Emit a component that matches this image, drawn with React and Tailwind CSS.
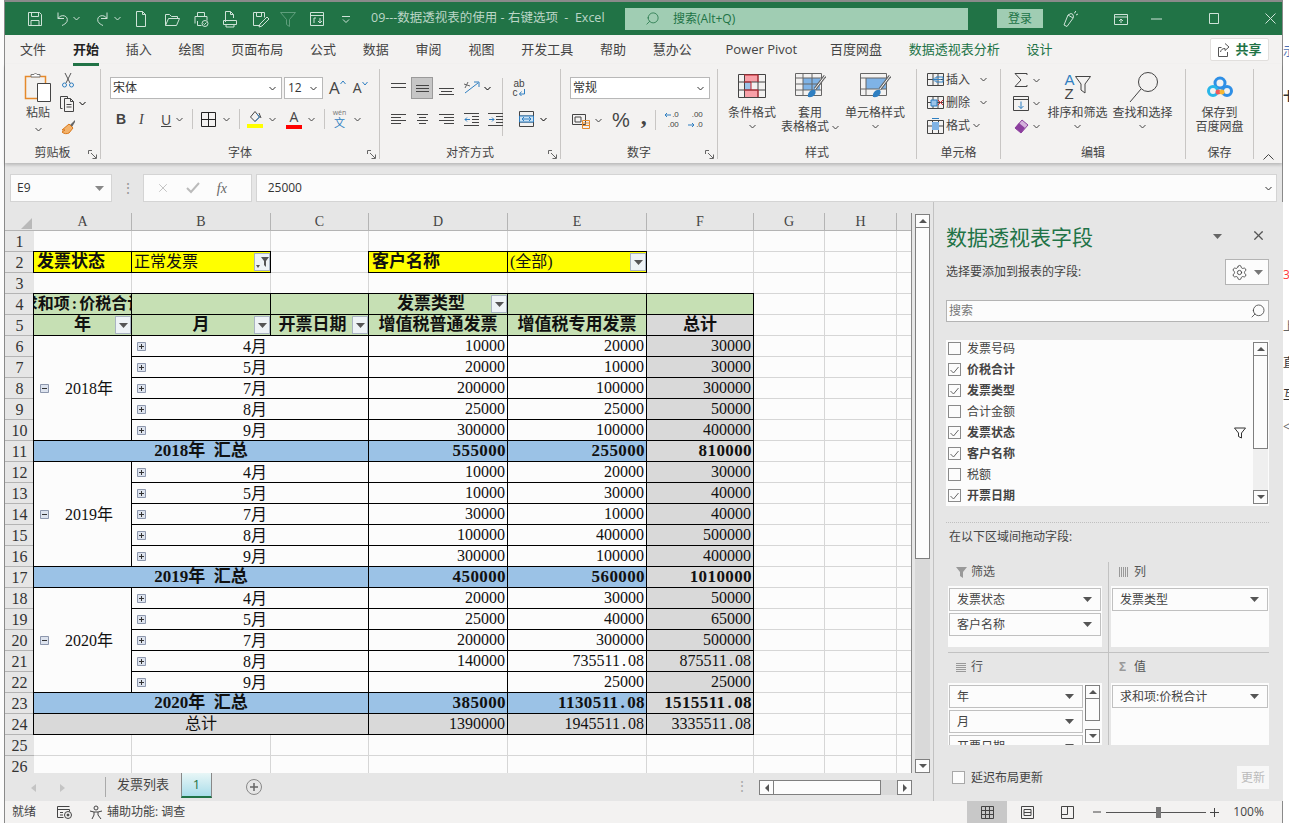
import React from "react";
import { Search, Settings, X } from "lucide-react";

const S = ({ w = 16, h = 16, c = "", children }) => (
    <svg width={w} height={h} viewBox={`0 0 ${w} ${h}`} fill="none" stroke="currentColor" strokeWidth="1" className={`shrink-0 ${c}`}>
        {children}
    </svg>
);
const Chev = ({ c = "" }) => (
    <S w={7} h={5} c={c}>
        <path d="M.5 1l3 3 3-3" />
    </S>
);
const Tri = ({ c = "text-[#555]" }) => (
    <svg width="9" height="5" viewBox="0 0 9 5" className={`shrink-0 ${c}`}>
        <path d="M0 0h9L4.5 5z" fill="currentColor" />
    </svg>
);
const Lines = ({ d, c = "" }) => (
    <S w={15} h={13} c={`text-[#444] ${c}`}>
        <path d={d} />
    </S>
);

const Launcher = () => (
    <S w={9} h={9} c="absolute right-[3px] top-[11px] text-[#666]">
        <path d="M.5 4V.5H4M3 3l5 5M4.5 8.5h4v-4" />
    </S>
);

const Group = ({ w, label, launcher, children }) => (
    <div className={`flex h-[90px] shrink-0 flex-col border-r border-[#c8c6c4] ${w}`}>
        <div className="flex-1">{children}</div>
        <div className="relative h-[20px] text-center text-[12px] leading-[28px] text-[#444]">
            {label}
            {launcher && <Launcher />}
        </div>
    </div>
);

const Big = ({ w, icon, lines, chevInline }) => (
    <div className={`flex flex-col items-center text-[12px] leading-[14px] text-[#444] ${w}`}>
        <div className="flex h-[32px] items-end pb-[3px]">{icon}</div>
        <div className="mt-[5px] flex flex-col items-center">
            {lines.map((l, i) => (
                <div key={l} className="flex items-center gap-[3px] whitespace-nowrap">
                    {l}
                    {chevInline && i === 1 && <Chev />}
                </div>
            ))}
        </div>
        {!chevInline && <Chev c="mt-[4px]" />}
    </div>
);

const CondIcon = (
    <S w={30} h={24} c="text-[#444]">
        <path d="M7 1h14v7H7z" fill="#f8a0a8" stroke="none" />
        <path d="M7 8h7v8H7z" fill="#9cc3e8" stroke="none" />
        <path d="M7 16h14v7H7z" fill="#f8a0a8" stroke="none" />
        <path d="M1.5.5h27v23h-27zM1.5 8h27M1.5 16h27M7.5.5v23M21 .5v23" />
        <path d="M7 1h14M7 8h7M14 8v8M7 16h14M21 1v7M21 16v7" stroke="#c8232c" />
    </S>
);
const TableIcon = (
    <S w={32} h={26} c="text-[#444]">
        <path d="M9 6h17v12H9z" fill="#7fb3e6" stroke="none" />
        <path d="M1.5 1.5h26v22h-26zM1.5 6h26M1.5 12h26M1.5 18h26M9 1.5v22M18 1.5v22" stroke="#666" />
        <path d="M31 4L21 17" stroke="#666" strokeWidth="3" />
        <path d="M31 4L21 17" stroke="#fff" />
        <path d="M14 25c-1-4 3-8 7-7 2 3-1 8-7 7z" fill="#2f7fc1" stroke="none" />
    </S>
);
const CellStyleIcon = (
    <S w={32} h={26} c="text-[#444]">
        <path d="M7 6h20v11H7z" fill="#7fb3e6" stroke="none" />
        <path d="M1.5 1.5h26v22h-26zM1.5 6h26M1.5 17h26M7 6v17" stroke="#666" />
        <path d="M31 4L21 17" stroke="#666" strokeWidth="3" />
        <path d="M31 4L21 17" stroke="#fff" />
        <path d="M14 25c-1-4 3-8 7-7 2 3-1 8-7 7z" fill="#2f7fc1" stroke="none" />
    </S>
);
const CloudIcon = (
    <svg width="28" height="22" viewBox="0 0 28 22" className="shrink-0">
        <circle cx="14" cy="7" r="5" fill="none" stroke="#2e8fe6" strokeWidth="3" />
        <circle cx="7" cy="15" r="4.5" fill="none" stroke="#29b6e8" strokeWidth="3" />
        <circle cx="21" cy="15" r="4.5" fill="none" stroke="#2e8fe6" strokeWidth="3" />
        <circle cx="12" cy="16" r="2.5" fill="#f0585a" />
        <circle cx="16" cy="16" r="2.5" fill="#f7b731" />
    </svg>
);

const Titlebar = () => (
    <div className="flex h-[33px] shrink-0 items-center bg-[#217346] text-[#cfe3d8]">
        <div className="ml-[21px] flex items-center">
            <S w={18} h={18}>
                <path d="M2.5 2.5h11l2 2v11h-13zM5.5 2.5v4h7v-4M5 15.5v-5h8v5" />
            </S>
            <S w={16} h={18} c="ml-[10px]">
                <path d="M4 2.5v6h6M4 8.5c3-5 11-3 9 3-1 2-3 3-5 4" />
            </S>
            <Chev c="ml-[3px]" />
            <S w={16} h={18} c="ml-[15px]">
                <path d="M12 2.5v6H6M12 8.5c-3-5-11-3-9 3 1 2 3 3 5 4" />
            </S>
            <Chev c="ml-[3px]" />
            <S w={14} h={18} c="ml-[13px]">
                <path d="M2.5 1.5h6l3 3v12h-9zM8.5 1.5v3h3" />
            </S>
            <S w={18} h={18} c="ml-[15px]">
                <path d="M2.5 15.5v-11h4l2 2h6v2M2.5 15.5h11l3-7h-11z" />
            </S>
            <S w={18} h={18} c="ml-[11px]">
                <path d="M5.5 6V2.5h7V6M3 13.5V6.500h12v4M5.500 11v4.500h4" />
                <circle cx="13" cy="13.5" r="3" />
                <path d="M11.5 13.500l1 1 2-2" />
            </S>
            <S w={16} h={18} c="ml-[12px]">
                <path d="M3.500 12V1.500h5l3 3V8M8.500 1.500v3h3M1.500 10.500h13v4h-13zM4 14.500v2.500h8v-2.500" />
            </S>
            <S w={18} h={18} c="ml-[13px]">
                <path d="M2.500 2.500h11v5M2.500 2.500v13h6M5.500 2.500v4h5v-4M16 7l-7 7-1 3 3-1 7-7z" />
            </S>
            <S w={18} h={18} c="ml-[10px] text-[#5f9e7c]">
                <path d="M1.500 2.500h15l-6 7v7l-3-2v-5z" />
            </S>
            <S w={18} h={18} c="ml-[11px]">
                <path d="M2.500 2.500h13v13h-13zM2.500 5.500h13M6 13V8h2M12 13V8M10 11l2 2 2-2" />
            </S>
            <S w={8} h={8} c="ml-[16px]">
                <path d="M0 1.500h8M1 4.500l3 3 3-3" />
            </S>
        </div>
        <div className="ml-[21px] w-[240px] whitespace-nowrap text-[12.5px] text-[#bcd6c7]">09---数据透视表的使用 - 右键选项&nbsp;&nbsp;-&nbsp;&nbsp;Excel</div>
        <div className="ml-[14px] flex h-[22px] w-[343px] items-center bg-[#a0cdb3] pl-[20px] text-[12px] text-[#217346]">
            <Search size={15} strokeWidth={1.25} className="-scale-x-100" />
            <span className="ml-[13px]">搜索(Alt+Q)</span>
        </div>
        <div className="ml-[29px] flex h-[19px] w-[46px] items-center justify-center bg-[#a0cdb3] text-[12px] text-[#217346]">登录</div>
        <S w={18} h={18} c="ml-[18px]">
            <path d="M6 16.500l-3-1.500 4-10 3-1.500 2 1 .500 3zM7 5l5 3M14 2l1-1M15 5l2-1M13 3l1.500-.5" />
        </S>
        <S w={14} h={14} c="ml-[35px]">
            <path d="M.5 2.500h13v10H.5zM.5 5h13M5 9l2-2 2 2M7 7v4" />
        </S>
        <S w={11} h={2} c="ml-[23px]">
            <path d="M0 1h11" />
        </S>
        <S w={10} h={11} c="ml-[47px]">
            <path d="M.5.5h9v10h-9z" />
        </S>
        <S w={11} h={11} c="ml-[46px]">
            <path d="M.5.5l10 10M10.500.5l-10 10" />
        </S>
    </div>
);

const tabs = ["开始", "插入", "绘图", "页面布局", "公式", "数据", "审阅", "视图", "开发工具", "帮助", "慧办公", "Power Pivot", "百度网盘"];

const Tabs = () => (
    <div className="flex h-[29px] shrink-0 items-center bg-[#f3f2f1] pl-[15px] pr-[13px] text-[13px] text-[#444]">
        <span>文件</span>
        <div className="ml-[27px] flex items-center gap-[26.75px]">
            {tabs.map((t, i) => (
                <span key={t} className={i === 0 ? "relative font-bold text-[#222]" : i === 11 ? "ml-[7px] mr-[6px]" : ""}>
                    {t}
                    {i === 0 && <i className="absolute -bottom-[7px] left-0 h-[3px] w-full bg-[#217346]" />}
                </span>
            ))}
            <span className="text-[#217346]">数据透视表分析</span>
            <span className="text-[#217346]">设计</span>
        </div>
        <div className="ml-auto flex h-[23px] w-[59px] items-center justify-center gap-[5px] rounded-[2px] border border-[#e1dfdd] bg-white text-[13px] font-bold text-[#217346]">
            <S w={13} h={14} c="text-[#555]">
                <path d="M8 .5l4 3.500-4 3.500V5.500C5 5.500 4 7 3.500 9M10.500 9v4.500h-9v-9h3" />
            </S>
            共享
        </div>
    </div>
);

const Ribbon = () => (
    <div className="flex h-[99px] shrink-0 bg-[#f3f2f1] pt-[5px] shadow-[0_2px_3px_rgba(0,0,0,.2)]">
        <Group w="w-[96px]" label="剪贴板" launcher>
            <div className="flex pl-[17px]">
                <div className="flex w-[32px] flex-col items-center text-[12px] leading-[16px] text-[#444]">
                    <svg width="28" height="30" viewBox="0 0 28 30" className="mt-[3px] shrink-0">
                        <path d="M1.500 4.500h20v22h-20z" fill="none" stroke="#e58a2c" strokeWidth="1.500" />
                        <path d="M7 5V2.500h3L11.500 1 13 2.500h3V5z" fill="#fff" stroke="#777" />
                        <path d="M13.500 11.500h13v18h-13z" fill="#fff" stroke="#444" />
                    </svg>
                    <span className="mt-[3px] whitespace-nowrap">粘贴</span>
                    <Chev c="mt-[6px]" />
                </div>
                <div className="ml-[5px] flex flex-col pt-[3px]">
                    <svg width="14" height="16" viewBox="0 0 14 16" className="ml-[2px] shrink-0" fill="none">
                        <path d="M4 1l5 10M10 1L5 11" stroke="#555" />
                        <circle cx="3.500" cy="13" r="2" stroke="#2f7fc1" />
                        <circle cx="10.500" cy="13" r="2" stroke="#2f7fc1" />
                    </svg>
                    <div className="mt-[7px] flex items-center gap-[3px]">
                        <S w={17} h={17} c="text-[#444]">
                            <path d="M3.500 13.500h-2v-12h7v2M5.500 3.500h6l3 3v10h-9zM11.500 3.500v3h3M7.500 9.500h5M7.500 12h5" />
                        </S>
                        <Chev />
                    </div>
                    <svg width="16" height="16" viewBox="0 0 16 16" className="ml-[1px] mt-[7px] shrink-0" fill="none">
                        <path d="M15 1l-5 5 2 2 3-5z" fill="#666" />
                        <path d="M9 5l4 4-4 5c-2 1-5 1-7-1l3-2-3 0z" fill="#f3b26a" stroke="#d9771a" />
                    </svg>
                </div>
            </div>
        </Group>
        <Group w="w-[279px]" label="字体" launcher>
            <div className="flex items-center pl-[9px] pt-[8px]">
                <div className="flex h-[22px] w-[172px] items-center justify-between border border-[#b8b8b8] bg-white px-[2px] pr-[5px] text-[12px] text-[#333]">
                    宋体
                    <Chev />
                </div>
                <div className="ml-[2px] flex h-[22px] w-[39px] items-center justify-between border border-[#b8b8b8] bg-white px-[3px] pr-[5px] text-[12px] text-[#333]">
                    12
                    <Chev />
                </div>
                <span className="ml-[6px] flex items-start text-[17px] leading-[20px] text-[#444]">
                    A<S w={6} h={5} c="mt-[2px] text-[#2f7fc1]"><path d="M.5 4l2.500-3 2.500 3" /></S>
                </span>
                <span className="ml-[7px] flex items-start text-[14px] leading-[20px] text-[#444]">
                    A<S w={6} h={5} c="mt-[3px] text-[#2f7fc1]"><path d="M.5 1l2.500 3 2.500-3" /></S>
                </span>
            </div>
            <div className="mt-[10px] flex h-[20px] items-center pl-[15px] text-[14px] text-[#444]">
                <span className="w-[9px] font-['Liberation_Sans'] font-bold">B</span>
                <span className="ml-[14px] w-[9px] font-['Liberation_Serif'] italic">I</span>
                <span className="ml-[13px] w-[9px] underline">U</span>
                <Chev c="ml-[6px]" />
                <i className="ml-[9px] h-[20px] border-l border-[#c8c6c4]" />
                <S w={15} h={15} c="ml-[8px] text-[#222]">
                    <path d="M.5.500h14v14H.5zM7.500.5v14M.5 7.500h14" />
                </S>
                <Chev c="ml-[7px]" />
                <i className="ml-[9px] h-[20px] border-l border-[#c8c6c4]" />
                <div className="ml-[7px] flex w-[16px] flex-col items-center">
                    <S w={13} h={12} c="text-[#444]">
                        <path d="M6 .5L1.500 6 6 10.500 10.500 6zM10 2l2 5" />
                        <path d="M8 3l2.500 3-4.500 4.500" stroke="#2f7fc1" />
                    </S>
                    <i className="mt-[1px] h-[4px] w-[16px] bg-[#ffff00]" />
                </div>
                <Chev c="ml-[6px]" />
                <div className="ml-[10px] flex w-[16px] flex-col items-center text-[14px] leading-[14px]">
                    A<i className="mt-[1px] h-[4px] w-[16px] bg-[#ff0000]" />
                </div>
                <Chev c="ml-[6px]" />
                <i className="ml-[9px] h-[20px] border-l border-[#c8c6c4]" />
                <div className="ml-[7px] flex w-[15px] flex-col items-center text-[7px] leading-[8px] text-[#777]">
                    wén
                    <span className="text-[11px] leading-[12px] text-[#2f7fc1]">文</span>
                </div>
                <Chev c="ml-[7px]" />
            </div>
        </Group>
        <Group w="w-[181px]" label="对齐方式" launcher>
            <div className="mt-[8px] flex h-[22px] items-center pl-[11px]">
                <Lines d="M0 1.500h15M0 5.500h15" />
                <div className="ml-[5px] flex h-[22px] w-[22px] items-center justify-center border border-[#9a9a9a] bg-[#c6c6c6]">
                    <Lines d="M1 3.500h13M1 6.500h13M1 9.500h13" />
                </div>
                <Lines d="M0 6.500h15M2 9.500h11M0 12.500h15" c="ml-[6px]" />
                <S w={18} h={16} c="ml-[9px] text-[#2f7fc1]">
                    <path d="M2 13L15 3M11 2h5v5" />
                    <path d="M1 4l6 2M2 8l3-6" stroke="#666" />
                </S>
                <Chev c="ml-[3px]" />
                <i className="ml-[11px] mt-[38px] h-[58px] self-center border-l border-[#c8c6c4]" />
                <div className="ml-[9px] flex w-[14px] flex-col items-center font-['Liberation_Sans'] text-[10px] leading-[9px] text-[#444]">
                    ab
                    <span className="flex items-center">c<S w={8} h={9} c="text-[#2f7fc1]"><path d="M6.500 1v5h-5M3.500 3.500l-2 2.500 2 2" /></S></span>
                </div>
            </div>
            <div className="mt-[7px] flex h-[26px] items-center pl-[11px]">
                <Lines d="M0 1.500h15M0 4.500h10M0 7.500h15M0 10.500h10" />
                <Lines d="M2 1.500h11M4 4.500h7M2 7.500h11M4 10.500h7" c="ml-[9px]" />
                <Lines d="M0 1.500h15M5 4.500h10M0 7.500h15M5 10.500h10" c="ml-[9px]" />
                <S w={15} h={13} c="ml-[10px] text-[#444]">
                    <path d="M0 .5h15M8 3.500h7M8 6.500h7M8 9.500h7M0 12.500h15" />
                    <path d="M6 6.500H1M3 4.500l-2 2 2 2" stroke="#2f7fc1" />
                </S>
                <S w={15} h={13} c="ml-[9px] text-[#444]">
                    <path d="M0 .5h15M8 3.500h7M8 6.500h7M8 9.500h7M0 12.500h15" />
                    <path d="M1 6.500h5M4 4.500l2 2-2 2" stroke="#2f7fc1" />
                </S>
                <S w={15} h={16} c="ml-[16px] text-[#444]">
                    <path d="M.5.500h14v15H.5zM.5 5h14M.5 11h14" />
                    <path d="M.5 5h14v6H.5z" fill="#cde3f5" stroke="#2f7fc1" />
                    <path d="M3 8h9M5 6l-2 2 2 2M10 6l2 2-2 2" stroke="#2f7fc1" />
                </S>
                <Chev c="ml-[6px]" />
            </div>
        </Group>
        <Group w="w-[157px]" label="数字" launcher>
            <div className="ml-[9px] mt-[8px] flex h-[22px] w-[140px] items-center justify-between border border-[#b8b8b8] bg-white pl-[2px] pr-[5px] text-[12px] text-[#333]">
                常规
                <Chev />
            </div>
            <div className="mt-[9px] flex h-[24px] items-center pl-[11px] text-[#444]">
                <S w={18} h={17}>
                    <path d="M.5 2.500h13v10H.5z" />
                    <path d="M3 5h6v5H3z" />
                    <path d="M10.500 8.500h7v8h-7zM10.500 11h7M10.500 13.500h7" stroke="#e58a2c" />
                </S>
                <Chev c="ml-[5px]" />
                <span className="ml-[10px] font-['Liberation_Sans'] text-[20px] leading-[20px]">%</span>
                <span className="ml-[11px] -translate-y-[4px] font-['Liberation_Serif'] text-[24px] font-bold leading-[16px]">,</span>
                <i className="ml-[8px] h-[20px] border-l border-[#c8c6c4]" />
                <div className="ml-[7px] flex w-[16px] flex-col font-['Liberation_Sans'] text-[8px] leading-[10px]">
                    <span className="flex items-center justify-end gap-[1px]"><S w={7} h={6} c="text-[#2f7fc1]"><path d="M7 3H1M3 1L1 3l2 2" /></S>.0</span>
                    <span className="text-right">.00</span>
                </div>
                <div className="ml-[8px] flex w-[16px] flex-col font-['Liberation_Sans'] text-[8px] leading-[10px]">
                    <span className="text-right">.00</span>
                    <span className="flex items-center justify-end gap-[1px]"><S w={7} h={6} c="text-[#2f7fc1]"><path d="M0 3h6M4 1l2 2-2 2" /></S>.0</span>
                </div>
            </div>
        </Group>
        <Group w="w-[199px]" label="样式">
            <div className="flex pl-[4px]">
                <Big w="w-[60px]" icon={CondIcon} lines={["条件格式"]} />
                <Big w="w-[56px]" icon={TableIcon} lines={["套用", "表格格式"]} chevInline />
                <Big w="w-[74px]" icon={CellStyleIcon} lines={["单元格样式"]} />
            </div>
        </Group>
        <Group w="w-[84px]" label="单元格">
            <div className="flex flex-col gap-[6px] pl-[10px] pt-[2px] text-[12px] leading-[17px] text-[#444]">
                <div className="flex items-center">
                    <S w={17} h={17}><path d="M.5 2.500h16v12H.5zM.5 8.500h16M6 2.500v12M11 2.500v12" /><path d="M9 6h7v5H9zM6 8.500h8M8 6.500l-2 2 2 2" stroke="#2f7fc1" /></S>
                    <span className="ml-[2px]">插入</span>
                    <Chev c="ml-[10px]" />
                </div>
                <div className="flex items-center">
                    <S w={17} h={17}><path d="M.5 2.500h16v12H.5zM.5 8.500h16M6 2.500v12M11 2.500v12" /><path d="M4 6h6v6H4z" fill="#9cc3e8" stroke="#2f7fc1" /><path d="M11 6l5 5M16 6l-5 5" stroke="#d9272e" /></S>
                    <span className="ml-[2px]">删除</span>
                    <Chev c="ml-[10px]" />
                </div>
                <div className="flex items-center">
                    <S w={17} h={17}><path d="M.5 3.500h16v13H.5zM.5 9h16M5.500 3.500v13M11.500 3.500v13" /><path d="M5 5h7v8H5z" fill="#7fb3e6" stroke="none" /><path d="M5 1.500h7" stroke="#2f7fc1" /></S>
                    <span className="ml-[2px]">格式</span>
                    <Chev c="ml-[3px]" />
                </div>
            </div>
        </Group>
        <Group w="w-[185px]" label="编辑">
            <div className="flex text-[12px] leading-[14px] text-[#444]">
                <div className="flex w-[44px] flex-col gap-[8px] pl-[12px] pt-[3px]">
                    <div className="flex items-center gap-[4px]">
                        <S w={16} h={16}><path d="M14 3V1.500H2L8 8l-6 6.500h12V13" /></S>
                        <Chev />
                    </div>
                    <div className="flex items-center gap-[4px]">
                        <S w={16} h={15}><path d="M.5.5h15v14H.5zM.5 3.500h15" /><path d="M8 5.500v7M5.500 10L8 12.500 10.500 10" stroke="#2f7fc1" /></S>
                        <Chev />
                    </div>
                    <div className="flex items-center gap-[4px]">
                        <svg width="16" height="15" viewBox="0 0 16 15" className="shrink-0"><path d="M9 1l6 5-7 8-6-5z" fill="#d4b1dc" stroke="#8c3f9e" /><path d="M6 4l6 5-4 5-6-5z" fill="#8c3f9e" /></svg>
                        <Chev />
                    </div>
                </div>
                <div className="flex w-[65px] flex-col items-center">
                    <div className="flex h-[32px] items-end">
                        <div className="flex flex-col font-['Liberation_Sans'] text-[15px] leading-[14px]">
                            <span className="text-[#2f7fc1]">A</span>
                            <span>Z</span>
                        </div>
                        <S w={16} h={20} c="mb-[5px] text-[#444]"><path d="M.5.5h15L10 8v9l-4-3V8z" /></S>
                    </div>
                    <div className="mt-[5px] whitespace-nowrap">排序和筛选</div>
                    <Chev c="mt-[4px]" />
                </div>
                <div className="flex w-[65px] flex-col items-center">
                    <S w={30} h={32} c="mt-[3px] text-[#444]">
                        <circle cx="20" cy="10" r="9.500" />
                        <path d="M13 17L2 30" />
                    </S>
                    <div className="mt-[2px] whitespace-nowrap">查找和选择</div>
                    <Chev c="mt-[4px]" />
                </div>
            </div>
        </Group>
        <Group w="w-[68px]" label="保存">
            <div className="flex flex-col items-center text-[12px] leading-[14px] text-[#444]">
                <div className="flex h-[32px] items-end pb-[3px]">{CloudIcon}</div>
                <div className="mt-[5px]">保存到</div>
                <div>百度网盘</div>
            </div>
        </Group>
        <div className="flex flex-1 items-end justify-center pb-[3px] text-[#444]">
            <S w={11} h={6}><path d="M.5 5.500l5-5 5 5" /></S>
        </div>
    </div>
);

const FormulaBar = () => (
    <div className="flex h-[39px] shrink-0 items-end pl-[5px] pr-[5px]">
        <div className="flex h-[28px] w-[102px] items-center justify-between border border-[#d4d4d4] bg-[#fcfcfc] pl-[6px] pr-[7px] font-['Open_Sans'] text-[12px] text-[#333]">
            E9
            <Tri c="text-[#888]" />
        </div>
        <div className="flex h-[28px] w-[31px] items-center justify-center text-[14px] leading-[6px] tracking-tighter text-[#999]">⋮</div>
        <div className="flex h-[28px] w-[109px] items-center border border-[#d4d4d4] bg-[#fcfcfc] pl-[12px] text-[#bbb]">
            <X size={14} strokeWidth={1.5} />
            <S w={14} h={12} c="ml-[16px]"><path d="M1 6l4 4 8-9" strokeWidth="2" /></S>
            <span className="ml-[17px] font-['Liberation_Serif'] text-[14px] italic text-[#666]">fx</span>
        </div>
        <div className="ml-[4px] flex h-[28px] w-[1023px] items-center justify-between border border-[#d4d4d4] bg-[#fcfcfc] pl-[11px] pr-[4px] font-['Open_Sans'] text-[12px] text-[#333]">
            25000
            <Chev />
        </div>
    </div>
);

const Num = ({ v }) => {
    const [a, b] = String(v).split(".");
    return (
        <>
            {a}
            {b && (
                <>
                    <span className="px-[2px]">.</span>
                    {b}
                </>
            )}
        </>
    );
};

const E = () => <div className="border-b border-r border-[#d6d6d6] bg-[#fcfcfc]" />;
const R = ({ n }) => (
    <div className="border-b border-[#b4b4b4] bg-[#e6e6e6] text-center text-[16px] leading-[21px] text-[#333]">{n}</div>
);
const P = ({ bg = "bg-[#fcfcfc]", c = "", children }) => (
    <div className={`relative -ml-px -mt-px overflow-hidden whitespace-nowrap border border-black text-[16px] leading-[19px] text-[#111] ${bg} ${c}`}>
        {children}
    </div>
);
const DD = ({ filter }) => (
    <span className="absolute bottom-[1px] right-0 top-[1px] flex w-[16px] items-center justify-center gap-[1px] border border-[#a9b4c2] bg-[#eef3f6]">
        {filter ? (
            <>
                <svg width="4" height="3" viewBox="0 0 4 3" className="mt-[8px] shrink-0"><path d="M0 0h4L2 3z" fill="#555" /></svg>
                <svg width="8" height="10" viewBox="0 0 8 10" className="shrink-0"><path d="M0 0h8L5 4v6L3 8V4z" fill="#555" /></svg>
            </>
        ) : (
            <Tri />
        )}
    </span>
);
const Box = ({ sign }) => (
    <svg width="9" height="9" viewBox="0 0 9 9" className="shrink-0 text-[#445]" fill="none">
        <path d="M.5.5h8v8h-8z" fill="#dde3ee" stroke="#8d97ad" />
        <path d={sign === "-" ? "M2 4.500h5" : "M2 4.500h5M4.500 2v5"} stroke="#333" />
    </svg>
);

const green = "bg-[#c6e0b4]";
const yellow = "bg-[#ffff00]";
const blue = "bg-[#9bc2e6]";
const gray = "bg-[#d9d9d9]";
const head = "text-[17px] font-bold";
const total = "pr-[1px] text-right text-[17px] font-bold tracking-[.4px]";

const years = [
    {
        y: "2018",
        start: 6,
        rows: [["4月", 10000, 20000, 30000], ["5月", 20000, 10000, 30000], ["7月", 200000, 100000, 300000], ["8月", 25000, 25000, 50000], ["9月", 300000, 100000, 400000]],
        sum: [555000, 255000, 810000],
    },
    {
        y: "2019",
        start: 12,
        rows: [["4月", 10000, 20000, 30000], ["5月", 10000, 30000, 40000], ["7月", 30000, 10000, 40000], ["8月", 100000, 400000, 500000], ["9月", 300000, 100000, 400000]],
        sum: [450000, 560000, 1010000],
    },
    {
        y: "2020",
        start: 18,
        rows: [["4月", 20000, 30000, 50000], ["5月", 25000, 40000, 65000], ["7月", 200000, 300000, 500000], ["8月", 140000, "735511.08", "875511.08"], ["9月", "", 25000, 25000]],
        sum: [385000, "1130511.08", "1515511.08"],
    },
];

const Blank = () => (
    <>
        <E />
        <E />
        <E />
    </>
);

const Sheet = () => (
    <div className="h-[560px] w-[907px] shrink-0 overflow-hidden border-r border-[#8a8a8a] font-['Liberation_Serif','Noto_Sans_CJK_SC',serif]">
        <div className="grid grid-cols-[29px_98px_139px_98px_139px_139px_107px_71px_72px_15px] grid-rows-[18px] auto-rows-[21px]">
            <div className="flex items-end justify-end border-b border-[#b4b4b4] bg-[#e6e6e6] pb-[1px] pr-[2px]">
                <svg width="11" height="11" viewBox="0 0 11 11" className="shrink-0"><path d="M11 0v11H0z" fill="#b9b9b9" /></svg>
            </div>
            {["A", "B", "C", "D", "E", "F", "G", "H", ""].map((l, i) => (
                <div key={i} className="border-b border-r border-[#b4b4b4] bg-[#e6e6e6] text-center text-[14px] leading-[18px] text-[#444]">
                    {l}
                </div>
            ))}

            <R n={1} />
            <E /><E /><E /><E /><E /><E /><E /><E /><E />

            <R n={2} />
            <P bg={yellow} c={`pl-[3px] ${head}`}>发票状态</P>
            <P bg={yellow} c="pl-[2px]">正常发票<DD filter /></P>
            <E />
            <P bg={yellow} c={`pl-[3px] ${head}`}>客户名称</P>
            <P bg={yellow} c="pl-[2px]">(全部)<DD /></P>
            <E /><E /><E /><E />

            <R n={3} />
            <E /><E /><E /><E /><E /><E /><E /><E /><E />

            <R n={4} />
            <P bg={green} c="flex justify-center font-bold"><span className="shrink-0">求和项<span className="px-[2px]">:</span>价税合计</span></P>
            <P bg={green} />
            <P bg={green} />
            <P bg={green} c={`pr-[14px] text-center ${head}`}>发票类型<DD /></P>
            <P bg={green} />
            <P bg={green} />
            <Blank />

            <R n={5} />
            <P bg={green} c={`text-center ${head}`}>年<DD /></P>
            <P bg={green} c={`text-center ${head}`}>月<DD /></P>
            <P bg={green} c={`pr-[14px] text-center ${head}`}>开票日期<DD /></P>
            <P bg={green} c={`text-center ${head}`}>增值税普通发票</P>
            <P bg={green} c={`text-center ${head}`}>增值税专用发票</P>
            <P bg={gray} c={`text-center ${head}`}>总计</P>
            <Blank />

            {years.map((b) => (
                <React.Fragment key={b.y}>
                    {b.rows.map((r, i) => (
                        <React.Fragment key={r[0]}>
                            <R n={b.start + i} />
                            {i === 0 && (
                                <P c="row-span-5 flex items-center pl-[6px]">
                                    <Box sign="-" />
                                    <span className="ml-[16px]">{b.y}年</span>
                                </P>
                            )}
                            <P c="col-span-2 flex items-center justify-between pl-[5px] pr-[101px]">
                                <Box />
                                <span>{r[0]}</span>
                            </P>
                            <P c="pr-[2px] text-right"><Num v={r[1]} /></P>
                            <P c="pr-[2px] text-right"><Num v={r[2]} /></P>
                            <P bg={gray} c="pr-[2px] text-right"><Num v={r[3]} /></P>
                            <Blank />
                        </React.Fragment>
                    ))}
                    <R n={b.start + 5} />
                    <P bg={blue} c={`col-span-3 text-center ${head}`}>{b.y}年&nbsp;&nbsp;汇总</P>
                    <P bg={blue} c={total}><Num v={b.sum[0]} /></P>
                    <P bg={blue} c={total}><Num v={b.sum[1]} /></P>
                    <P bg={gray} c={total}><Num v={b.sum[2]} /></P>
                    <Blank />
                </React.Fragment>
            ))}

            <R n={24} />
            <P bg={gray} c="col-span-3 text-center">总计</P>
            <P bg={gray} c="pr-[2px] text-right"><Num v={1390000} /></P>
            <P bg={gray} c="pr-[2px] text-right"><Num v="1945511.08" /></P>
            <P bg={gray} c="pr-[2px] text-right"><Num v="3335511.08" /></P>
            <Blank />

            <R n={25} />
            <E /><E /><E /><E /><E /><E /><E /><E /><E />
            <R n={26} />
            <E /><E /><E /><E /><E /><E /><E /><E /><E />
        </div>
    </div>
);

const ArrowBtn = ({ dir, c = "" }) => (
    <div className={`flex h-[14px] w-[15px] shrink-0 items-center justify-center border border-[#7f7f7f] bg-[#fcfcfc] ${c}`}>
        <svg width="8" height="8" viewBox="0 0 8 8" className="shrink-0 text-[#555]">
            <path
                d={dir === "up" ? "M0 6h8L4 2z" : dir === "down" ? "M0 2h8L4 6z" : dir === "left" ? "M6 0v8L2 4z" : "M2 0v8l4-4z"}
                fill="currentColor"
            />
        </svg>
    </div>
);

const SheetTabs = () => (
    <div className="flex h-[28px] w-[928px] shrink-0 items-start text-[13px] text-[#444]">
        <div className="flex h-[23px] w-[100px] shrink-0 items-center">
            <svg width="5" height="8" viewBox="0 0 5 8" className="ml-[26px] mt-[6px] shrink-0"><path d="M5 0v8L0 4z" fill="#c4c4c4" /></svg>
            <svg width="5" height="8" viewBox="0 0 5 8" className="ml-[24px] mt-[6px] shrink-0"><path d="M0 0v8l5-4z" fill="#c4c4c4" /></svg>
        </div>
        <div className="mt-[4px] h-[20px] border-l border-[#aaa]" />
        <div className="ml-[11px] flex h-[24px] items-center">发票列表</div>
        <div className="ml-[12px] flex h-[25px] w-[31px] items-center justify-center border-x border-b-[2px] border-[#888] border-b-[#217346] bg-gradient-to-b from-[#e8f6f6] to-[#a9ddea] text-[#217346]">1</div>
        <div className="ml-[34px] mt-[6px] flex h-[16px] w-[16px] items-center justify-center rounded-full border border-[#888] text-[#666]">
            <S w={8} h={8}><path d="M4 0v8M0 4h8" strokeWidth="1.500" /></S>
        </div>
        <div className="ml-[473px] mt-[6px] text-[14px] leading-[14px] text-[#aaa]">⋮</div>
        <div className="ml-[10px] mt-[7px] flex h-[15px] w-[153px] items-stretch bg-[#d9d9d9]">
            <ArrowBtn dir="left" c="!h-[15px]" />
            <div className="w-[107px] border-y border-r border-[#7f7f7f] bg-[#fcfcfc]" />
            <div className="flex-1" />
            <ArrowBtn dir="right" c="!h-[15px]" />
        </div>
    </div>
);

const FieldRow = ({ label, on, bold, filter }) => (
    <div className="flex h-[21px] items-center pl-[2px] text-[12px] text-[#444]">
        <div className="flex h-[13px] w-[13px] items-center justify-center border border-[#8a8a8a] bg-[#fcfcfc]">
            {on && <S w={9} h={8} c="text-[#666]"><path d="M.5 4l3 3 5-6" /></S>}
        </div>
        <span className={`ml-[6px] ${bold ? "font-bold" : ""}`}>{label}</span>
        {filter && (
            <S w={12} h={12} c="ml-auto mr-[3px] text-[#333]"><path d="M.5 1h11L7.500 6v5l-3-1.500V6z" /></S>
        )}
    </div>
);

const fields = [
    ["发票号码", false],
    ["价税合计", true],
    ["发票类型", true],
    ["合计金额", false],
    ["发票状态", true, true],
    ["客户名称", true],
    ["税额", false],
    ["开票日期", true],
];

const Pill = ({ label, c = "" }) => (
    <div className={`flex h-[23px] shrink-0 items-center justify-between border border-[#c0c0c0] bg-[#fcfcfc] pl-[7px] pr-[8px] text-[12px] text-[#444] ${c}`}>
        {label}
        <Tri />
    </div>
);

const AreaTitle = ({ icon, label }) => (
    <div className="flex h-[20px] items-center pl-[8px] text-[12px] text-[#555]">
        <span className="flex w-[15px] justify-start">{icon}</span>
        <span>{label}</span>
    </div>
);

const Panel = () => (
    <div className="w-[350px] border-l border-[#c2c2c2] bg-[#e6e6e6] pl-[12px] pr-[14px]">
        <div className="flex h-[49px] items-end">
            <div className="text-[21px] leading-[28px] text-[#217346]">数据透视表字段</div>
            <Tri c="mb-[12px] ml-[120px] text-[#666]" />
            <X size={15} strokeWidth={2} className="mb-[8px] ml-[29px] text-[#555]" />
        </div>
        <div className="mt-[8px] flex h-[26px] items-center justify-between">
            <span className="text-[12px] text-[#444]">选择要添加到报表的字段:</span>
            <div className="flex h-[26px] w-[44px] items-center justify-center gap-[6px] border border-[#b4b4b4] bg-[#fcfcfc] text-[#444]">
                <Settings size={17} strokeWidth={1.25} />
                <Tri c="text-[#777]" />
            </div>
        </div>
        <div className="mt-[15px] flex h-[22px] items-center justify-between border border-[#b4b4b4] bg-[#fcfcfc] pl-[2px] pr-[2px] text-[12px] text-[#777]">
            搜索
            <Search size={16} strokeWidth={1.25} className="-scale-x-100 text-[#444]" />
        </div>
        <div className="mt-[18px] flex h-[166px] overflow-hidden bg-[#fcfcfc]">
            <div className="-mt-[2px] flex-1 pr-[4px]">
                {fields.map(([l, on, f]) => (
                    <FieldRow key={l} label={l} on={on} bold={on} filter={f} />
                ))}
            </div>
            <div className="mr-[1px] mt-[2px] flex h-[162px] w-[15px] flex-col bg-[#efefef]">
                <ArrowBtn dir="up" />
                <div className="h-[93px] border-x border-b border-[#7f7f7f] bg-[#fcfcfc]" />
                <div className="flex-1" />
                <ArrowBtn dir="down" />
            </div>
        </div>
        <div className="mt-[16px] border-t border-dotted border-[#c0c0c0]" />
        <div className="mt-[5px] h-[18px] pl-[3px] text-[12px] leading-[18px] text-[#444]">在以下区域间拖动字段:</div>
        <div className="mt-[16px] grid h-[183px] grid-cols-[161px_160px] grid-rows-[91px_92px] pl-[2px]">
            <div className="border-b border-r border-[#c2c2c2] pr-[6px]">
                <AreaTitle
                    label="筛选"
                    icon={<svg width="11" height="11" viewBox="0 0 11 11"><path d="M0 0h11L7 5v6L4 9V5z" fill="#999" /></svg>}
                />
                <div className="mt-[4px] h-[61px] bg-[#fcfcfc] pt-[2px]">
                    <Pill label="发票状态" c="mx-[1px]" />
                    <Pill label="客户名称" c="mx-[1px] mt-[2px]" />
                </div>
            </div>
            <div className="border-b border-[#c2c2c2] pl-[2px]">
                <AreaTitle
                    label="列"
                    icon={<S w={9} h={10} c="text-[#999]"><path d="M.5 0v10M2.500 0v10M4.500 0v10M6.500 0v10M8.500 0v10" /></S>}
                />
                <div className="mt-[4px] h-[61px] bg-[#fcfcfc] pt-[2px]">
                    <Pill label="发票类型" c="mx-[1px]" />
                </div>
            </div>
            <div className="border-r border-[#c2c2c2] pr-[6px] pt-[4px]">
                <AreaTitle
                    label="行"
                    icon={<S w={10} h={9} c="text-[#999]"><path d="M0 .5h10M0 2.500h10M0 4.500h10M0 6.500h10M0 8.500h10" /></S>}
                />
                <div className="mt-[6px] flex h-[62px] overflow-hidden bg-[#fcfcfc] pt-[2px]">
                    <div className="flex w-[135px] shrink-0 flex-col gap-[2px] pl-[1px]">
                        <Pill label="年" />
                        <Pill label="月" />
                        <Pill label="开票日期" />
                    </div>
                    <div className="ml-[2px] flex h-[58px] w-[15px] flex-col bg-[#fcfcfc]">
                        <ArrowBtn dir="up" />
                        <div className="h-[22px] border-x border-b border-[#7f7f7f]" />
                        <div className="flex-1" />
                        <ArrowBtn dir="down" />
                    </div>
                </div>
            </div>
            <div className="pl-[2px] pt-[4px]">
                <AreaTitle
                    label="值"
                    icon={<span className="text-[12px] font-bold leading-[12px] text-[#999]">Σ</span>}
                />
                <div className="mt-[6px] h-[62px] bg-[#fcfcfc] pt-[2px]">
                    <Pill label="求和项:价税合计" c="mx-[1px]" />
                </div>
            </div>
        </div>
        <div className="mt-[21px] flex items-center pl-[6px]">
            <div className="h-[13px] w-[13px] border border-[#a8a8a8] bg-[#fcfcfc]" />
            <span className="ml-[6px] text-[12px] text-[#444]">延迟布局更新</span>
            <div className="ml-auto flex h-[23px] w-[32px] items-center justify-center bg-[#f7f7f7] text-[12px] text-[#bbb]">更新</div>
        </div>
    </div>
);

const StatusBar = () => (
    <div className="flex h-[22px] shrink-0 items-center bg-[#f3f2f1] text-[12px] text-[#444]">
        <span className="ml-[7px]">就绪</span>
        <S w={15} h={14} c="ml-[21px]">
            <path d="M.5 1.500h12M.5 1.500v11h6M.5 4.500h12v2M3 7.500h3M3 10h3" />
            <circle cx="11" cy="10" r="3.500" />
            <circle cx="11" cy="10" r="1" fill="currentColor" />
        </S>
        <S w={15} h={15} c="ml-[17px]">
            <circle cx="7" cy="3" r="2" />
            <path d="M1 6l4 1h4l4-1M5 7v3l-2 4M9 7v3l3 4" />
        </S>
        <span className="ml-[3px] whitespace-nowrap">辅助功能: 调查</span>
        <div className="ml-[782px] flex h-[22px] w-[40px] items-center justify-center bg-[#c8c8c8]">
            <S w={13} h={13}><path d="M.5.5h12v12H.5zM.5 4.500h12M.5 8.500h12M4.500.5v12M8.500.5v12" /></S>
        </div>
        <div className="flex w-[40px] justify-center">
            <S w={13} h={13}><path d="M.5.5h12v12H.5zM3 3.500h7v6H3zM3 6.500h7" /></S>
        </div>
        <div className="flex w-[40px] justify-center">
            <S w={13} h={13}><path d="M.5 12.500V.5h12v12M.5 8.500h6V.5M.5 12.500h12" /></S>
        </div>
        <S w={8} h={2} c="ml-[6px]"><path d="M0 1h8" /></S>
        <div className="ml-[5px] flex w-[100px] items-center">
            <div className="h-[1px] w-[50px] bg-[#555]" />
            <div className="h-[11px] w-[5px] bg-[#777]" />
            <div className="h-[1px] w-[45px] bg-[#555]" />
        </div>
        <S w={9} h={9} c="ml-[4px]"><path d="M0 4.500h9M4.500 0v9" /></S>
        <span className="ml-[14px] font-['Open_Sans']">100%</span>
    </div>
);

// scraps of the window behind, cut by the right edge
const BehindStrip = () => (
    <div className="flex w-[6px] shrink-0 flex-col overflow-hidden bg-white pt-[46px] text-[12px] leading-[12px] text-[#666]">
        <span className="h-[12px] w-[12px] text-[#4a6fb5]">示</span>
        <span className="mt-[33px] h-[12px] w-[12px] font-bold text-[#333]">卡</span>
        <span className="mt-[166px] h-[12px] w-[12px] text-[#ff3b3b]">3</span>
        <span className="mt-[40px] h-[12px] w-[12px]">上</span>
        <span className="mt-[24px] h-[12px] w-[12px] text-[#333]">直</span>
        <span className="mt-[20px] h-[12px] w-[12px] text-[#333]">互</span>
        <span className="mt-[20px] h-[12px] w-[12px]">&lt;</span>
    </div>
);

export default function App() {
    return (
        <div className="flex h-[823px] w-[1289px] overflow-hidden bg-white font-['Open_Sans','Noto_Sans_CJK_SC',sans-serif]">
            <div className="w-[4px] shrink-0 bg-[#fcfcfc]" />
            <div className="flex w-[1279px] shrink-0 flex-col border-x border-t-2 border-[#8a8a8a] bg-[#e6e6e6]">
                <Titlebar />
                <Tabs />
                <Ribbon />
                <FormulaBar />
                <div className="flex min-h-0 flex-1">
                    <div className="flex w-[928px] shrink-0 flex-col pt-[11px]">
                        <div className="flex h-[560px] shrink-0">
                            <Sheet />
                            <div className="ml-[3px] mt-[1px] flex h-[559px] w-[15px] flex-col bg-[#d9d9d9]">
                                <ArrowBtn dir="up" />
                                <div className="h-[331px] border-x border-b border-[#7f7f7f] bg-[#fcfcfc]" />
                                <div className="flex-1" />
                                <ArrowBtn dir="down" />
                            </div>
                        </div>
                        <SheetTabs />
                    </div>
                    <Panel />
                </div>
                <StatusBar />
            </div>
            <BehindStrip />
        </div>
    );
}
